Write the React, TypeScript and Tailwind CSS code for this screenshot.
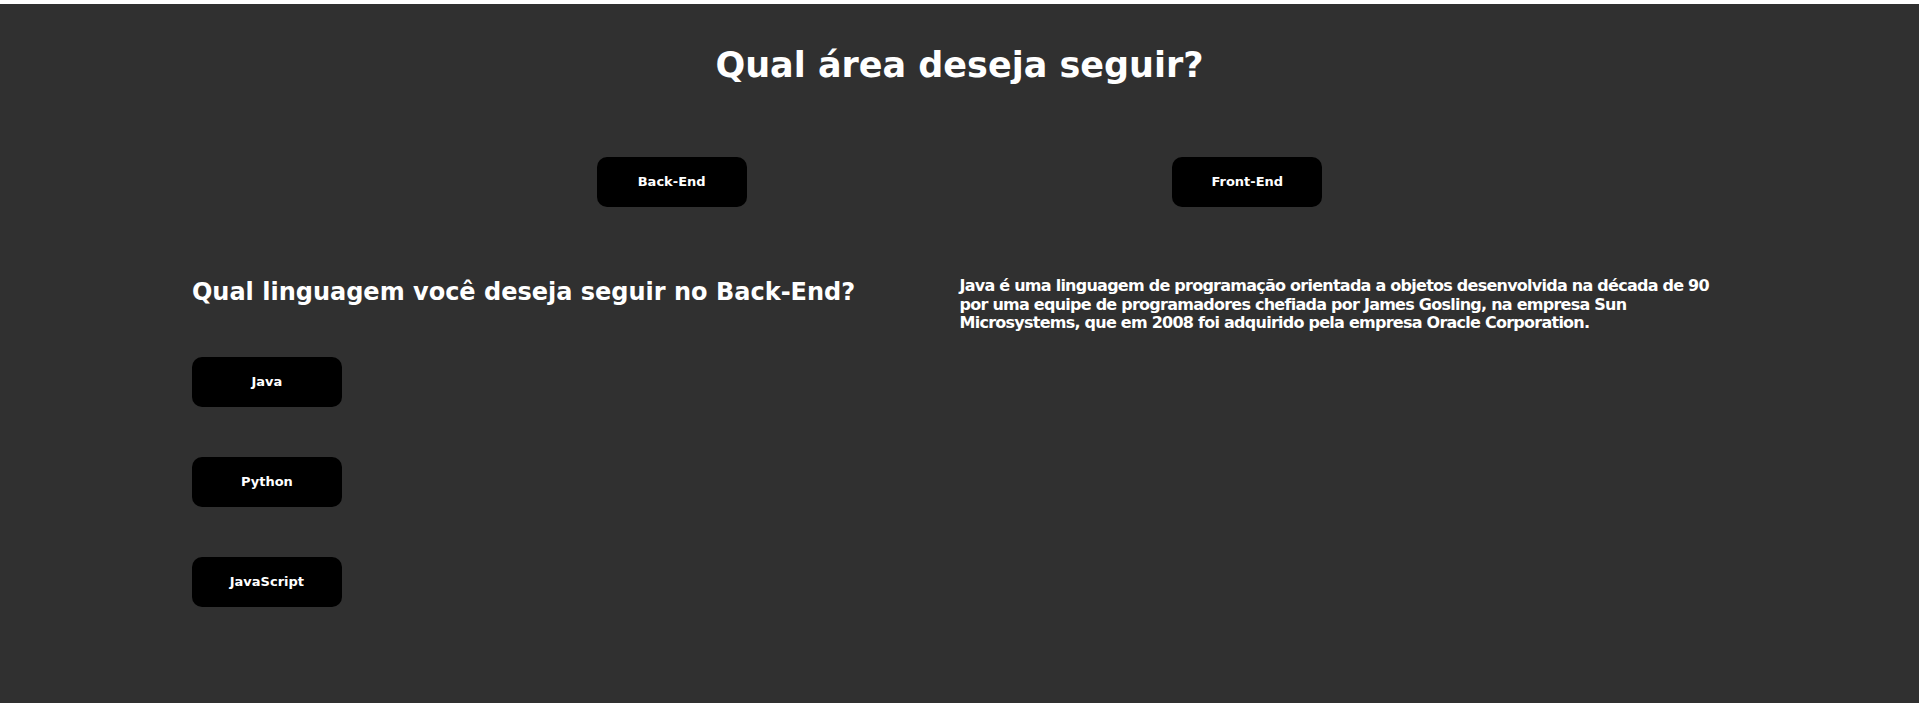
import React from "react";

const font = { fontFamily: '"DejaVu Sans", Verdana, sans-serif' };

function OptionButton({ label }: { label: string }) {
  return (
    <button className="w-[150px] h-[50px] rounded-[10px] bg-black text-white text-[13px] font-bold">
      {label}
    </button>
  );
}

export default function App() {
  return (
    <div className="bg-white pt-1" style={font}>
      <div className="bg-[#303030] min-h-[699px] text-white">
        <h1 className="text-center text-[35px] font-bold pt-[44px] leading-none">
          Qual área deseja seguir?
        </h1>

        <div className="w-[60%] mx-auto grid grid-cols-2 justify-items-center mt-[74px]">
          <OptionButton label="Back-End" />
          <OptionButton label="Front-End" />
        </div>

        <div className="w-[80%] mx-auto grid grid-cols-2 items-start mt-[70px]">
          <div className="flex flex-col items-start">
            <h2 className="text-[24px] font-bold leading-tight">
              Qual linguagem você deseja seguir no Back-End?
            </h2>
            <div className="flex flex-col gap-[50px] mt-[50px]">
              <OptionButton label="Java" />
              <OptionButton label="Python" />
              <OptionButton label="JavaScript" />
            </div>
          </div>
          <p className="text-[16px] font-bold leading-[18.5px] tracking-[-0.75px]">
            Java é uma linguagem de programação orientada a objetos desenvolvida na década de 90
            por uma equipe de programadores chefiada por James Gosling, na empresa Sun
            Microsystems, que em 2008 foi adquirido pela empresa Oracle Corporation.
          </p>
        </div>
      </div>
    </div>
  );
}
